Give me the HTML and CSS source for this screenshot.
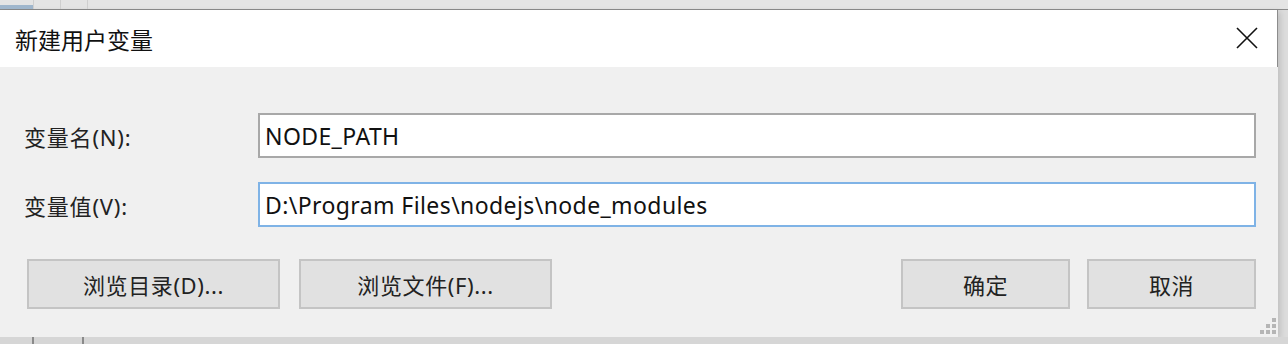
FILE: index.html
```html
<!DOCTYPE html>
<html>
<head>
  <meta charset="utf-8" />
  <title>新建用户变量</title>
  <link rel="stylesheet" href="styles.css">
</head>
<body>
  <div class="backdrop top-strip">
    <span class="cell blue"></span>
    <span class="cell"></span>
    <span class="cell"></span>
    <span class="cell wide"></span>
  </div>

  <div class="dialog">
    <div class="titlebar">
      <span class="title">新建用户变量</span>
      <span class="close">
        <svg width="22" height="22" viewBox="0 0 22 22">
          <path d="M1 1 L21 21 M21 1 L1 21" stroke="#111" stroke-width="1.6" fill="none" />
        </svg>
      </span>
    </div>

    <div class="content">
      <div class="row">
        <label class="field-label">变量名(N):</label>
        <div class="input">NODE_PATH</div>
      </div>
      <div class="row">
        <label class="field-label">变量值(V):</label>
        <div class="input focused">D:\Program Files\nodejs\node_modules</div>
      </div>

      <div class="buttons">
        <div class="group">
          <div class="btn wide">浏览目录(D)...</div>
          <div class="btn wide">浏览文件(F)...</div>
        </div>
        <div class="group">
          <div class="btn">确定</div>
          <div class="btn">取消</div>
        </div>
      </div>

      <div class="grip">
        <span></span><span></span><span></span>
        <span></span><span></span><span></span>
      </div>
    </div>
  </div>

  <div class="backdrop bottom-strip">
    <span class="cell"></span>
    <span class="cell"></span>
    <span class="cell wide"></span>
  </div>
</body>
</html>
```

FILE: styles.css
```css
body {
  margin: 0;
  width: 1288px;
  height: 344px;
  overflow: hidden;
  background: #dcdcdc;
  font-family: "Noto Sans", "Noto Sans CJK SC", sans-serif;
  color: #1b1b1b;
}
.backdrop {
  display: flex;
  background: #e4e4e4;
}
.top-strip {
  height: 9px;
  border-bottom: 1px solid #8c8c8c;
}
.bottom-strip {
  height: 7px;
  background: #d6d6d6;
}
.cell {
  width: 26px;
  border-right: 1px solid #cfcfcf;
}
.cell.blue {
  width: 33px;
  background: linear-gradient(#e4e4e4 60%, #9fb6cc 60%);
}
.bottom-strip .cell {
  width: 32px;
  border-right: 2px solid #8a8a8a;
}
.bottom-strip .cell:nth-child(2) {
  width: 48px;
}
.cell.wide {
  flex: 1;
  border-right: none;
}
.dialog {
  width: 1278px;
  box-shadow: 2px 2px 6px rgba(0, 0, 0, 0.15);
}
.titlebar {
  display: flex;
  align-items: center;
  justify-content: space-between;
  height: 57px;
  padding: 0 19px 0 15px;
  background: #fff;
  border-right: 1px solid #8c8c8c;
}
.title {
  font-size: 23px;
  color: #111;
}
.close {
  display: flex;
  margin-top: -2px;
}
.content {
  position: relative;
  height: 270px;
  box-sizing: border-box;
  padding: 46px 22px 0 24px;
  background: #f0f0f0;
}
.row {
  display: flex;
  align-items: center;
  margin-bottom: 24px;
}
.field-label {
  width: 234px;
  font-size: 22px;
  letter-spacing: 0.8px;
  color: #222;
}
.input {
  flex: 1;
  height: 45px;
  box-sizing: border-box;
  padding: 0 0 0 5px;
  display: flex;
  align-items: center;
  font-size: 23px;
  letter-spacing: 0.4px;
  color: #111;
  background: #fff;
  border: 2px solid #a8a8a8;
}
.input.focused {
  border-color: #7fb3e6;
}
.buttons {
  display: flex;
  justify-content: space-between;
  margin: 32px 0 0 3px;
}
.group {
  display: flex;
  gap: 17px;
}
.group:first-child {
  gap: 19px;
}
.btn {
  width: 169px;
  height: 50px;
  box-sizing: border-box;
  display: flex;
  align-items: center;
  justify-content: center;
  font-size: 22px;
  letter-spacing: 0.6px;
  color: #222;
  background: #e1e1e1;
  border: 2px solid #c4c4c4;
}
.btn.wide {
  width: 253px;
}
.grip {
  position: absolute;
  right: 2px;
  bottom: 3px;
  display: grid;
  grid-template-columns: repeat(3, 4px);
  grid-template-rows: repeat(3, 4px);
  gap: 2px;
}
.grip span {
  background: #b5b5b5;
}
.grip span:nth-child(1) { grid-area: 1 / 3; }
.grip span:nth-child(2) { grid-area: 2 / 2; }
.grip span:nth-child(3) { grid-area: 2 / 3; }
.grip span:nth-child(4) { grid-area: 3 / 1; }
.grip span:nth-child(5) { grid-area: 3 / 2; }
.grip span:nth-child(6) { grid-area: 3 / 3; }
```
